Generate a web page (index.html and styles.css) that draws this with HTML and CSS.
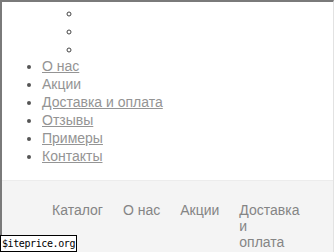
FILE: index.html
```html
<!DOCTYPE html>
<html>
<head>
<meta charset="utf-8">
<link rel="stylesheet" href="styles.css">
</head>
<body>
<div class="frame">
  <ul class="nav-list">
    <li class="nested-holder">
      <ul class="sub-list">
        <li></li>
        <li></li>
        <li></li>
      </ul>
    </li>
    <li><a href="#">О нас</a></li>
    <li><a href="#" class="plain">Акции</a></li>
    <li><a href="#">Доставка и оплата</a></li>
    <li><a href="#">Отзывы</a></li>
    <li><a href="#">Примеры</a></li>
    <li><a href="#">Контакты</a></li>
  </ul>
  <div class="band">
    <nav class="menu">
      <span class="menu-item">Каталог</span>
      <span class="menu-item">О нас</span>
      <span class="menu-item">Акции</span>
      <span class="menu-item narrow">Доставка и оплата</span>
    </nav>
  </div>
  <div class="badge">$iteprice.org</div>
</div>
</body>
</html>
```

FILE: styles.css
```css
html, body {
  margin: 0;
  padding: 0;
  background: #fff;
}
body {
  font-family: "Liberation Sans", Arial, sans-serif;
  font-size: 14px;
  color: #888;
  width: 336px;
  height: 252px;
  overflow: hidden;
}
.frame {
  position: relative;
  box-sizing: border-box;
  width: 334px;
  height: 252px;
  border-top: 2px solid #7a7a7a;
  border-left: 2px solid #7a7a7a;
  border-right: 1px solid #e2e2e2;
  display: flex;
  flex-direction: column;
}
.nav-list {
  margin: 0;
  padding: 2px 0 0 40px;
  list-style: disc;
  line-height: 18px;
  color: #555;
}
.nav-list a {
  color: #949494;
  text-decoration: underline;
}
.nav-list a.plain {
  text-decoration: none;
}
.nested-holder {
  list-style: none;
}
.sub-list {
  margin: 0 0 -1px;
  padding-left: 40px;
  list-style: circle;
  color: #444;
}
.sub-list li {
  height: 18px;
}
.band {
  margin-top: 15px;
  flex: 1;
  background: #f4f4f4;
  border-top: 1px solid #ececec;
  padding: 21px 0 0 50px;
}
.menu {
  display: flex;
  gap: 20px;
  line-height: 16px;
  color: #858585;
}
.menu-item {
  display: block;
  flex: none;
}
.narrow {
  width: 52px;
}
.badge {
  position: absolute;
  left: -2px;
  bottom: 0;
  background: #fff;
  border: 1px solid #000;
  font-family: "DejaVu Sans Mono", monospace;
  font-size: 10px;
  line-height: 15px;
  color: #000;
  padding: 0 1px;
  letter-spacing: -0.4px;
}
```
